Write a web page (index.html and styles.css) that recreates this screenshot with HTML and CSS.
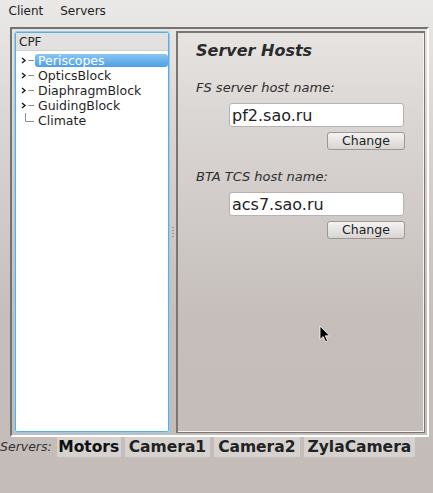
FILE: index.html
```html
<!DOCTYPE html>
<html lang="en">
<head>
    <meta charset="UTF-8">
    <meta name="viewport" content="width=device-width, initial-scale=1.0">
    <title>CPF client</title>
    <link rel="stylesheet" href="styles.css">
</head>
<body>
    <div class="menubar"><span class="menuItem">Client</span><span class="menuItem">Servers</span></div>

    <div class="frame">
        <div class="tree">
            <div class="treeHeader">CPF</div>
            <ul class="treeList">
                <li class="node">
                    <svg class="branch" width="19" height="15"><polyline points="6,5 9,7.5 6,10" class="chevron"/><line x1="12.5" y1="7.5" x2="18" y2="7.5" class="dash"/></svg>
                    <span class="nodeLabel selected">Periscopes</span>
                </li>
                <li class="node">
                    <svg class="branch" width="19" height="15"><polyline points="6,5 9,7.5 6,10" class="chevron"/><line x1="12.5" y1="7.5" x2="18" y2="7.5" class="dash"/></svg>
                    <span class="nodeLabel">OpticsBlock</span>
                </li>
                <li class="node">
                    <svg class="branch" width="19" height="15"><polyline points="6,5 9,7.5 6,10" class="chevron"/><line x1="12.5" y1="7.5" x2="18" y2="7.5" class="dash"/></svg>
                    <span class="nodeLabel">DiaphragmBlock</span>
                </li>
                <li class="node">
                    <svg class="branch" width="19" height="15"><polyline points="6,5 9,7.5 6,10" class="chevron"/><line x1="12.5" y1="7.5" x2="18" y2="7.5" class="dash"/></svg>
                    <span class="nodeLabel">GuidingBlock</span>
                </li>
                <li class="node">
                    <svg class="branch" width="19" height="15"><polyline points="9.5,0 9.5,8.5 18,8.5" class="leaf"/></svg>
                    <span class="nodeLabel">Climate</span>
                </li>
            </ul>
        </div>

        <div class="splitter"><span class="grip"></span></div>

        <div class="hosts">
            <h2 class="hostsTitle">Server Hosts</h2>
            <div class="hostField">
                <label class="hostLabel">FS server host name:</label>
                <input class="hostInput" type="text" value="pf2.sao.ru">
                <button class="hostBtn">Change</button>
            </div>
            <div class="hostField">
                <label class="hostLabel">BTA TCS host name:</label>
                <input class="hostInput" type="text" value="acs7.sao.ru">
                <button class="hostBtn">Change</button>
            </div>
            <!-- mouse pointer resting over the panel -->
            <svg class="pointer" width="12" height="18" viewBox="0 0 12 18">
                <path d="M1 1 L1 14.5 L4.2 11.5 L6.6 16.8 L8.6 15.9 L6.3 10.8 L10.6 10.8 Z" fill="#000" stroke="#fff" stroke-width="0.8"/>
            </svg>
        </div>
    </div>

    <div class="serverTabs">
        <span class="tabsCaption">Servers:</span>
        <span class="tab active">Motors</span>
        <span class="tab">Camera1</span>
        <span class="tab">Camera2</span>
        <span class="tab">ZylaCamera</span>
    </div>
</body>
</html>
```

FILE: styles.css
```css
*{margin: 0; padding: 0; box-sizing: border-box;}
body{width: 433px; height: 493px; overflow: hidden; font-family: "DejaVu Sans", sans-serif; font-size: 12px; color: #1f1f1f;
     background: linear-gradient(#ebe9e7 0, #dad6d4 120px, #c5bebb 320px, #c3bcb9 100%);}

/* top menu */
.menubar{display: flex; height: 22px; line-height: 22px;}
.menuItem{padding: 0 8.5px; color: #222;}

/* main sunken frame */
.frame{display: flex; width: 419px; height: 410px; margin: 5px 0 0 10px; padding: 2px; border: 2px solid; border-color: #77726f #fff #fff #77726f;}

/* tree on the left */
.tree{width: 156px; background: #fff; border: 1px solid #93cdee; border-radius: 3px; box-shadow: inset 0 0 0 1px #5aafe2; padding: 1px; overflow: hidden;}
.treeHeader{height: 18px; line-height: 17px; padding: 1px 0 0 3px; background: #e3e1df; border-bottom: 1px solid #d2cfcd; color: #222;}
.treeList{list-style: none; padding-top: 2px; font-size: 12.5px;}
.node{display: flex; height: 15px; line-height: 15px;}
.branch{flex: none; display: block;}
.chevron{fill: none; stroke: #1a1a1a; stroke-width: 1.4;}
.dash{stroke: #8a8a8a; stroke-width: 1;}
.leaf{fill: none; stroke: #8d8d8d; stroke-width: 1;}
.nodeLabel{padding: 0 3px; color: #1f1f1f;}
.nodeLabel.selected{flex: 1; margin-top: 1px; height: 13px; line-height: 13px; color: #fff; border-radius: 3px;
     background: linear-gradient(#8ac6f2, #4d9fe4);}

/* splitter handle */
.splitter{width: 6px; display: flex; align-items: center; justify-content: center;}
.grip{width: 2px; height: 10px; background: repeating-linear-gradient(#9c9896 0 1px, transparent 1px 3px);}

/* server hosts panel */
.hosts{position: relative; flex: 1; padding: 8px 0 0 18px; border: 1px solid #7b7674; border-width: 2px 1px 1px 2px; box-shadow: inset -1px -1px 0 #f6f4f3;}
.hostsTitle{font-size: 16px; font-weight: bold; font-style: italic; line-height: 20px; color: #2a2a2a; margin-bottom: 19px;}
.hostField{display: flex; flex-direction: column; width: 209px;}
.hostField + .hostField{margin-top: 19px;}
.hostLabel{font-size: 13px; font-style: italic; line-height: 16px; color: #2e2e2e;}
.hostInput{margin: 7px 0 0 33px; width: 175px; height: 24px; padding: 0 2px; border: 1px solid #b7b2b0; border-radius: 3px; background: #fff;
     font-family: "DejaVu Sans", sans-serif; font-size: 16px; color: #222; outline: none;}
.hostBtn{align-self: flex-end; margin-top: 5px; width: 78px; height: 18px; border: 1px solid #9c9795; border-radius: 3px;
     background: linear-gradient(#f5f4f3, #d7d4d2); font-family: "DejaVu Sans", sans-serif; font-size: 12.5px; color: #222; line-height: 16px;}
.pointer{position: absolute; left: 141px; top: 292px;}

/* bottom server tabs */
.serverTabs{display: flex; height: 20px; gap: 4px;}
.tabsCaption{font-size: 12.5px; font-style: italic; line-height: 20px; color: #333; margin-right: 1px;}
.tab{padding: 0 4px; line-height: 20px; background: #d6d2d0; font-size: 15.5px; font-weight: bold; color: #222;}
.tab.active{padding: 0 1.5px; color: #111;}
```
